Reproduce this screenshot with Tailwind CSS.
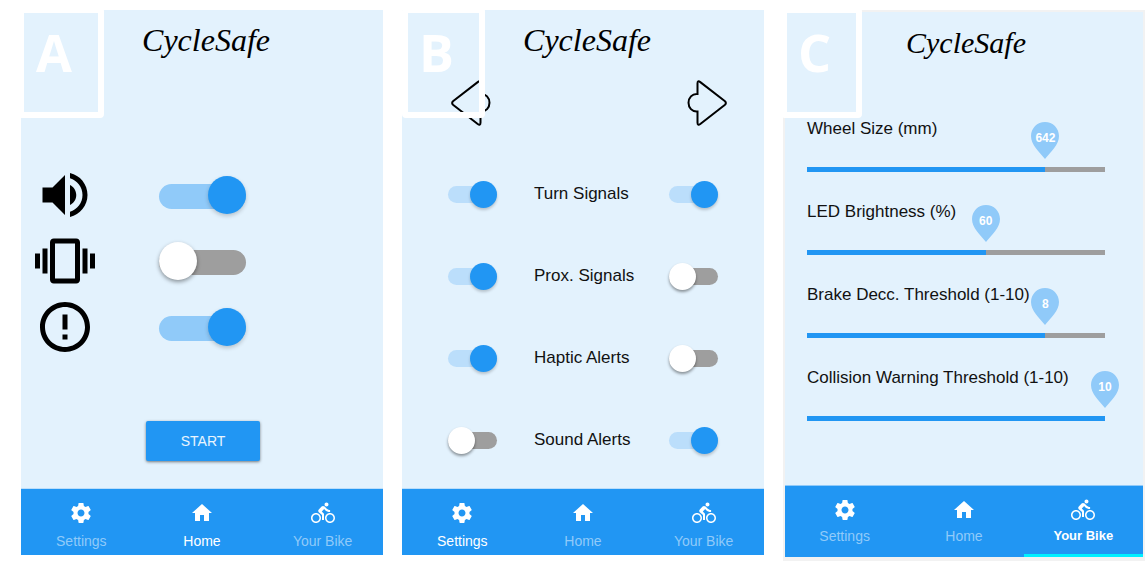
<!DOCTYPE html>
<html lang="en">
<head>
<meta charset="utf-8">
<meta name="viewport" content="width=device-width, initial-scale=1">
<title>CycleSafe</title>
<script src="https://cdn.jsdelivr.net/npm/@tailwindcss/browser@4"></script>
</head>
<body class="bg-white font-['Liberation_Sans',Arial,sans-serif] text-[#111]">

<!-- Shared icon shapes -->
<svg class="hidden" aria-hidden="true">
  <symbol id="i-gear" viewBox="0 0 24 24"><path d="M19.43 12.98c.04-.32.07-.64.07-.98s-.03-.66-.07-.98l2.11-1.65c.19-.15.24-.42.12-.64l-2-3.46c-.12-.22-.39-.3-.61-.22l-2.49 1c-.52-.4-1.08-.73-1.69-.98l-.38-2.65C14.46 2.18 14.25 2 14 2h-4c-.25 0-.46.18-.49.42l-.38 2.65c-.61.25-1.17.59-1.69.98l-2.49-1c-.23-.09-.49 0-.61.22l-2 3.46c-.13.22-.07.49.12.64l2.11 1.65c-.04.32-.07.65-.07.98s.03.66.07.98l-2.11 1.65c-.19.15-.24.42-.12.64l2 3.46c.12.22.39.3.61.22l2.49-1c.52.4 1.08.73 1.69.98l.38 2.65c.03.24.24.42.49.42h4c.25 0 .46-.18.49-.42l.38-2.65c.61-.25 1.17-.59 1.69-.98l2.49 1c.23.09.49 0 .61-.22l2-3.46c.12-.22.07-.49-.12-.64l-2.11-1.65zM12 15.5c-1.93 0-3.5-1.57-3.5-3.5s1.57-3.5 3.5-3.5 3.5 1.57 3.5 3.5-1.57 3.5-3.5 3.5z"/></symbol>
  <symbol id="i-home" viewBox="0 0 24 24"><path d="M10 20v-6h4v6h5v-8h3L12 3 2 12h3v8z"/></symbol>
  <symbol id="i-bike" viewBox="0 0 24 24"><path d="M15.5 5.5c1.1 0 2-.9 2-2s-.9-2-2-2-2 .9-2 2 .9 2 2 2zM5 12c-2.800 0-5 2.200-5 5s2.200 5 5 5 5-2.200 5-5-2.200-5-5-5zm0 8.500c-1.900 0-3.500-1.600-3.500-3.500s1.600-3.500 3.500-3.500 3.500 1.600 3.500 3.500-1.600 3.500-3.500 3.500zm5.800-10l2.400-2.400.8.8c1.300 1.300 3 2.100 5.100 2.100V9c-1.500 0-2.700-.6-3.600-1.500l-1.900-1.900c-.5-.4-1-.6-1.600-.6s-1.100.2-1.400.6L7.800 8.400c-.4.4-.6.9-.6 1.400 0 .6.2 1.100.6 1.400L11 14v5h2v-6.200l-2.200-2.300zM19 12c-2.800 0-5 2.200-5 5s2.200 5 5 5 5-2.200 5-5-2.200-5-5-5zm0 8.500c-1.900 0-3.500-1.600-3.500-3.500s1.600-3.500 3.500-3.500 3.500 1.600 3.500 3.500-1.600 3.500-3.500 3.500z"/></symbol>
  <symbol id="i-pin" viewBox="0 0 28 37"><path d="M14 0C6.200 0 0 6.200 0 14c0 9 8 15.500 14 23 6-7.500 14-14 14-23C28 6.200 21.800 0 14 0z"/></symbol>
  <symbol id="i-turn" viewBox="0 0 40 48"><path d="M10.500 15V4.500q0-3.600 2.800-1.400L37.700 22q2.400 2 0 4L13.300 45q-2.800 2.100-2.800-1.400V32.500C5 33 1.500 28.600 1.500 23.800S5 14.500 10.500 15z" fill="none" stroke="#000" stroke-width="2"/></symbol>
</svg>

<main class="grid grid-cols-3 items-start gap-[19px] pt-[10px] pl-[21px]">

  <!-- Home -->
  <section class="relative bg-[#e3f2fd]" aria-label="Home screen">
    <div class="absolute -left-[3px] -top-[3px] h-[111px] w-[86px] rounded-sm border-6 border-white pl-3 pt-[7px] font-['Open_Sans',sans-serif] text-[52px]/[64px] font-bold text-white">A</div>
    <h1 class="pt-[10px] pl-2 text-center font-['Z003','Monotype_Corsiva','Liberation_Serif',serif] text-[32px]/[40px] italic text-black">CycleSafe</h1>

    <div class="mt-[105px] flex flex-col gap-[6px] pl-[14px]">
      <div class="flex items-center gap-16">
        <label for="sound"><svg class="size-[60px]" viewBox="0 0 24 24" role="img" aria-label="Sound"><path d="M3 9v6h4l5 5V4L7 9H3zm13.500 3c0-1.770-1.020-3.290-2.500-4.030v8.050c1.480-.73 2.500-2.250 2.500-4.020zM14 3.230v2.060c2.890.86 5 3.540 5 6.710s-2.110 5.850-5 6.710v2.060c4.010-.91 7-4.490 7-8.770s-2.990-7.860-7-8.770z"/></svg></label>
        <input id="sound" type="checkbox" role="switch" checked class="relative h-[38px] w-[87px] appearance-none before:absolute before:inset-x-0 before:top-2 before:h-[25px] before:rounded-full before:bg-[#9e9e9e] after:absolute after:left-0 after:top-0 after:size-[38px] after:rounded-full after:bg-white after:shadow-[0_2px_4px_rgba(0,0,0,0.4)] checked:before:bg-[#90caf9] checked:after:left-auto checked:after:right-0 checked:after:bg-[#2196f3] checked:after:shadow-[0_2px_4px_rgba(0,0,0,0.2)]">
      </div>
      <div class="flex items-center gap-16">
        <label for="vibrate"><svg class="size-[60px]" viewBox="0 0 24 24" role="img" aria-label="Vibration"><path d="M0 15h2V9H0v6zm3 2h2V7H3v10zm19-8v6h2V9h-2zm-3 8h2V7h-2v10zM16.500 3h-9C6.670 3 6 3.670 6 4.500v15c0 .83.67 1.500 1.500 1.500h9c.83 0 1.500-.67 1.500-1.500v-15c0-.83-.67-1.500-1.500-1.500zM16 19H8V5h8v14z"/></svg></label>
        <input id="vibrate" type="checkbox" role="switch" class="relative h-[38px] w-[87px] appearance-none before:absolute before:inset-x-0 before:top-2 before:h-[25px] before:rounded-full before:bg-[#9e9e9e] after:absolute after:left-0 after:top-0 after:size-[38px] after:rounded-full after:bg-white after:shadow-[0_2px_4px_rgba(0,0,0,0.4)] checked:before:bg-[#90caf9] checked:after:left-auto checked:after:right-0 checked:after:bg-[#2196f3] checked:after:shadow-[0_2px_4px_rgba(0,0,0,0.2)]">
      </div>
      <div class="flex items-center gap-16">
        <label for="warn"><svg class="size-[60px]" viewBox="0 0 24 24" role="img" aria-label="Warnings"><path d="M11 15h2v2h-2zm0-8h2v6h-2zm.99-5C6.470 2 2 6.480 2 12s4.470 10 9.990 10C17.520 22 22 17.520 22 12S17.520 2 11.990 2zM12 20c-4.420 0-8-3.580-8-8s3.580-8 8-8 8 3.580 8 8-3.580 8-8 8z"/></svg></label>
        <input id="warn" type="checkbox" role="switch" checked class="relative h-[38px] w-[87px] appearance-none before:absolute before:inset-x-0 before:top-2 before:h-[25px] before:rounded-full before:bg-[#9e9e9e] after:absolute after:left-0 after:top-0 after:size-[38px] after:rounded-full after:bg-white after:shadow-[0_2px_4px_rgba(0,0,0,0.4)] checked:before:bg-[#90caf9] checked:after:left-auto checked:after:right-0 checked:after:bg-[#2196f3] checked:after:shadow-[0_2px_4px_rgba(0,0,0,0.2)]">
      </div>
    </div>

    <div class="mt-16 mb-[27px] pl-[2px] text-center">
      <button type="button" class="mx-auto block h-10 w-[114px] rounded-xs bg-[#2196f3] text-sm text-white/90 shadow-[0_1px_3px_rgba(0,0,0,0.5)]">START</button>
    </div>

    <nav class="grid grid-cols-3 border-t border-[#bbdefb] bg-[#2196f3] text-sm text-[#90caf9]">
      <a href="#" class="flex flex-col items-center gap-[6px] pt-3 pb-1"><svg class="size-6 fill-white"><use href="#i-gear"/></svg>Settings</a>
      <a href="#" class="flex flex-col items-center gap-[6px] pt-3 pb-1 text-white" aria-current="page"><svg class="size-6 fill-white"><use href="#i-home"/></svg>Home</a>
      <a href="#" class="flex flex-col items-center gap-[6px] pt-3 pb-1"><svg class="size-6 fill-white"><use href="#i-bike"/></svg>Your Bike</a>
    </nav>
  </section>

  <!-- Settings -->
  <section class="relative bg-[#e3f2fd]" aria-label="Settings screen">
    <h1 class="pt-[10px] pl-2 text-center font-['Z003','Monotype_Corsiva','Liberation_Serif',serif] text-[32px]/[40px] italic text-black">CycleSafe</h1>
    <div class="mt-[19px] flex justify-between pl-[49px] pr-[37px]">
      <svg class="h-12 w-10 -scale-x-100" role="img" aria-label="Left"><use href="#i-turn"/></svg>
      <svg class="h-12 w-10" role="img" aria-label="Right"><use href="#i-turn"/></svg>
    </div>
    <div class="absolute left-0 -top-[3px] h-[111px] w-[83px] rounded-sm border-6 border-white pl-[11px] pt-[7px] font-['Open_Sans',sans-serif] text-[52px]/[64px] font-bold text-white">B</div>

    <div class="mt-[26px] mb-[7px] pl-[46px] pr-[46px] text-[17px] whitespace-nowrap">
      <div class="flex h-[82px] items-center gap-[37px]">
        <input type="checkbox" role="switch" aria-labelledby="l-turn" checked class="relative h-[27px] w-[49px] shrink-0 appearance-none before:absolute before:inset-x-0 before:top-[5px] before:h-[17px] before:rounded-full before:bg-[#9e9e9e] after:absolute after:left-0 after:top-0 after:size-[27px] after:rounded-full after:bg-white after:shadow-[0_2px_3px_rgba(0,0,0,0.4)] checked:before:bg-[#bbdefb] checked:after:left-auto checked:after:right-0 checked:after:bg-[#2196f3] checked:after:shadow-[0_2px_3px_rgba(0,0,0,0.2)]">
        <span id="l-turn" class="w-0 flex-1">Turn Signals</span>
        <input type="checkbox" role="switch" aria-labelledby="l-turn" checked class="relative h-[27px] w-[49px] shrink-0 appearance-none before:absolute before:inset-x-0 before:top-[5px] before:h-[17px] before:rounded-full before:bg-[#9e9e9e] after:absolute after:left-0 after:top-0 after:size-[27px] after:rounded-full after:bg-white after:shadow-[0_2px_3px_rgba(0,0,0,0.4)] checked:before:bg-[#bbdefb] checked:after:left-auto checked:after:right-0 checked:after:bg-[#2196f3] checked:after:shadow-[0_2px_3px_rgba(0,0,0,0.2)]">
      </div>
      <div class="flex h-[82px] items-center gap-[37px]">
        <input type="checkbox" role="switch" aria-labelledby="l-prox" checked class="relative h-[27px] w-[49px] shrink-0 appearance-none before:absolute before:inset-x-0 before:top-[5px] before:h-[17px] before:rounded-full before:bg-[#9e9e9e] after:absolute after:left-0 after:top-0 after:size-[27px] after:rounded-full after:bg-white after:shadow-[0_2px_3px_rgba(0,0,0,0.4)] checked:before:bg-[#bbdefb] checked:after:left-auto checked:after:right-0 checked:after:bg-[#2196f3] checked:after:shadow-[0_2px_3px_rgba(0,0,0,0.2)]">
        <span id="l-prox" class="w-0 flex-1">Prox. Signals</span>
        <input type="checkbox" role="switch" aria-labelledby="l-prox" class="relative h-[27px] w-[49px] shrink-0 appearance-none before:absolute before:inset-x-0 before:top-[5px] before:h-[17px] before:rounded-full before:bg-[#9e9e9e] after:absolute after:left-0 after:top-0 after:size-[27px] after:rounded-full after:bg-white after:shadow-[0_2px_3px_rgba(0,0,0,0.4)] checked:before:bg-[#bbdefb] checked:after:left-auto checked:after:right-0 checked:after:bg-[#2196f3] checked:after:shadow-[0_2px_3px_rgba(0,0,0,0.2)]">
      </div>
      <div class="flex h-[82px] items-center gap-[37px]">
        <input type="checkbox" role="switch" aria-labelledby="l-haptic" checked class="relative h-[27px] w-[49px] shrink-0 appearance-none before:absolute before:inset-x-0 before:top-[5px] before:h-[17px] before:rounded-full before:bg-[#9e9e9e] after:absolute after:left-0 after:top-0 after:size-[27px] after:rounded-full after:bg-white after:shadow-[0_2px_3px_rgba(0,0,0,0.4)] checked:before:bg-[#bbdefb] checked:after:left-auto checked:after:right-0 checked:after:bg-[#2196f3] checked:after:shadow-[0_2px_3px_rgba(0,0,0,0.2)]">
        <span id="l-haptic" class="w-0 flex-1">Haptic Alerts</span>
        <input type="checkbox" role="switch" aria-labelledby="l-haptic" class="relative h-[27px] w-[49px] shrink-0 appearance-none before:absolute before:inset-x-0 before:top-[5px] before:h-[17px] before:rounded-full before:bg-[#9e9e9e] after:absolute after:left-0 after:top-0 after:size-[27px] after:rounded-full after:bg-white after:shadow-[0_2px_3px_rgba(0,0,0,0.4)] checked:before:bg-[#bbdefb] checked:after:left-auto checked:after:right-0 checked:after:bg-[#2196f3] checked:after:shadow-[0_2px_3px_rgba(0,0,0,0.2)]">
      </div>
      <div class="flex h-[82px] items-center gap-[37px]">
        <input type="checkbox" role="switch" aria-labelledby="l-sound" class="relative h-[27px] w-[49px] shrink-0 appearance-none before:absolute before:inset-x-0 before:top-[5px] before:h-[17px] before:rounded-full before:bg-[#9e9e9e] after:absolute after:left-0 after:top-0 after:size-[27px] after:rounded-full after:bg-white after:shadow-[0_2px_3px_rgba(0,0,0,0.4)] checked:before:bg-[#bbdefb] checked:after:left-auto checked:after:right-0 checked:after:bg-[#2196f3] checked:after:shadow-[0_2px_3px_rgba(0,0,0,0.2)]">
        <span id="l-sound" class="w-0 flex-1">Sound Alerts</span>
        <input type="checkbox" role="switch" aria-labelledby="l-sound" checked class="relative h-[27px] w-[49px] shrink-0 appearance-none before:absolute before:inset-x-0 before:top-[5px] before:h-[17px] before:rounded-full before:bg-[#9e9e9e] after:absolute after:left-0 after:top-0 after:size-[27px] after:rounded-full after:bg-white after:shadow-[0_2px_3px_rgba(0,0,0,0.4)] checked:before:bg-[#bbdefb] checked:after:left-auto checked:after:right-0 checked:after:bg-[#2196f3] checked:after:shadow-[0_2px_3px_rgba(0,0,0,0.2)]">
      </div>
    </div>

    <nav class="grid grid-cols-3 border-t border-[#bbdefb] bg-[#2196f3] text-sm text-[#90caf9]">
      <a href="#" class="flex flex-col items-center gap-[6px] pt-3 pb-1 text-white" aria-current="page"><svg class="size-6 fill-white"><use href="#i-gear"/></svg>Settings</a>
      <a href="#" class="flex flex-col items-center gap-[6px] pt-3 pb-1"><svg class="size-6 fill-white"><use href="#i-home"/></svg>Home</a>
      <a href="#" class="flex flex-col items-center gap-[6px] pt-3 pb-1"><svg class="size-6 fill-white"><use href="#i-bike"/></svg>Your Bike</a>
    </nav>
  </section>

  <!-- Your Bike -->
  <section class="relative border-2 border-b-4 border-[#f2f2f2] bg-[#e3f2fd]" aria-label="Your Bike screen">
    <h1 class="pt-[11px] pl-1 text-center font-['Z003','Monotype_Corsiva','Liberation_Serif',serif] text-[30px]/[40px] italic text-black">CycleSafe</h1>
    <div class="absolute -left-1 -top-[5px] h-[111px] w-[81px] rounded-sm border-6 border-white pl-[11px] pt-[7px] font-['Open_Sans',sans-serif] text-[52px]/[64px] font-bold text-white">C</div>

    <div class="relative mt-[54px] mb-9 flex flex-col gap-7 pl-[22px] pr-[38px] pb-7 text-[17px]/[24px]">
      <div class="relative flex flex-col gap-[26px]">
        <label for="wheel">Wheel Size (mm)</label>
        <input id="wheel" type="range" min="402" max="702" value="642" class="block h-[5px] w-full appearance-none [&::-webkit-slider-thumb]:size-0 [&::-webkit-slider-thumb]:appearance-none" style="background:linear-gradient(to right,#2196f3 80%,#9e9e9e 80%)">
        <output for="wheel" class="absolute bottom-[13px] h-[37px] w-7 -translate-x-1/2 text-center text-xs/[32px] font-bold text-white" style="left:80%"><svg class="absolute inset-0 h-[37px] w-7 fill-[#90caf9]"><use href="#i-pin"/></svg><span class="relative">642</span></output>
      </div>
      <div class="relative flex flex-col gap-[26px]">
        <label for="led">LED Brightness (%)</label>
        <input id="led" type="range" min="0" max="100" value="60" class="block h-[5px] w-full appearance-none [&::-webkit-slider-thumb]:size-0 [&::-webkit-slider-thumb]:appearance-none" style="background:linear-gradient(to right,#2196f3 60%,#9e9e9e 60%)">
        <output for="led" class="absolute bottom-[13px] h-[37px] w-7 -translate-x-1/2 text-center text-xs/[32px] font-bold text-white" style="left:60%"><svg class="absolute inset-0 h-[37px] w-7 fill-[#90caf9]"><use href="#i-pin"/></svg><span class="relative">60</span></output>
      </div>
      <div class="relative flex flex-col gap-[26px]">
        <label for="brake">Brake Decc. Threshold (1-10)</label>
        <input id="brake" type="range" min="0" max="10" value="8" class="block h-[5px] w-full appearance-none [&::-webkit-slider-thumb]:size-0 [&::-webkit-slider-thumb]:appearance-none" style="background:linear-gradient(to right,#2196f3 80%,#9e9e9e 80%)">
        <output for="brake" class="absolute bottom-[13px] h-[37px] w-7 -translate-x-1/2 text-center text-xs/[32px] font-bold text-white" style="left:80%"><svg class="absolute inset-0 h-[37px] w-7 fill-[#90caf9]"><use href="#i-pin"/></svg><span class="relative">8</span></output>
      </div>
      <div class="relative flex flex-col gap-[26px]">
        <label for="collision">Collision Warning Threshold (1-10)</label>
        <input id="collision" type="range" min="0" max="10" value="10" class="block h-[5px] w-full appearance-none [&::-webkit-slider-thumb]:size-0 [&::-webkit-slider-thumb]:appearance-none" style="background:linear-gradient(to right,#2196f3 100%,#9e9e9e 100%)">
        <output for="collision" class="absolute bottom-[13px] h-[37px] w-7 -translate-x-1/2 text-center text-xs/[32px] font-bold text-white" style="left:100%"><svg class="absolute inset-0 h-[37px] w-7 fill-[#90caf9]"><use href="#i-pin"/></svg><span class="relative">10</span></output>
      </div>
    </div>

    <nav class="grid grid-cols-3 border-t border-[#90caf9] bg-[#2196f3] text-sm text-[#90caf9]">
      <a href="#" class="flex flex-col items-center gap-1 pt-3 pb-[11px]"><svg class="size-6 fill-white"><use href="#i-gear"/></svg>Settings</a>
      <a href="#" class="flex flex-col items-center gap-1 pt-3 pb-[11px]"><svg class="size-6 fill-white"><use href="#i-home"/></svg>Home</a>
      <a href="#" class="flex flex-col items-center gap-1 border-b-3 border-[#00f0ff] pt-3 pb-2 text-white" aria-current="page"><svg class="size-6 fill-white"><use href="#i-bike"/></svg><span class="text-[13px]/[20px] font-bold">Your Bike</span></a>
    </nav>
  </section>
</main>
</body>
</html>
